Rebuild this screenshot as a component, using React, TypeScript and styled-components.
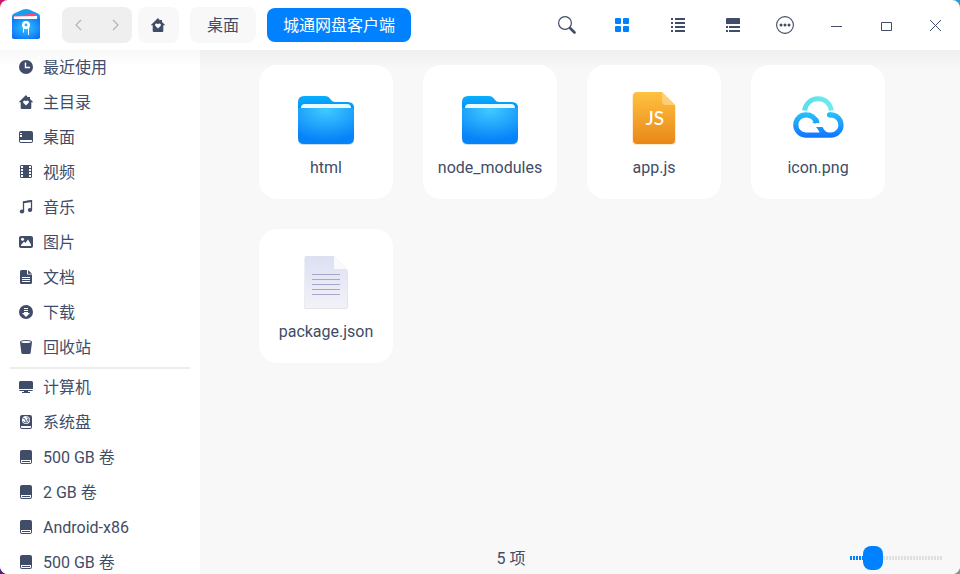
import React, { useState } from "react";
import styled, { createGlobalStyle } from "styled-components";

const INK = "#414d68";
const BLUE = "#0081ff";

const GlobalStyle = createGlobalStyle`
  * { box-sizing: border-box; }
  body {
    margin: 0;
    font-family: Roboto, "Noto Sans CJK SC", sans-serif;
    font-size: 16px;
    line-height: 24px;
    color: ${INK};
  }
  button { font: inherit; color: inherit; border: 0; padding: 0; background: none; }
  svg { display: block; flex: none; }
`;

const Desktop = styled.div`
  background:
    linear-gradient(#cf1463, #cf1463) left top / 50% 50% no-repeat,
    linear-gradient(#2a9bd0, #2a9bd0) right top / 50% 50% no-repeat,
    linear-gradient(#5a1d82, #5a1d82) left bottom / 50% 50% no-repeat,
    #8f8f8f;
`;

const Window = styled.div`
  display: flex;
  flex-direction: column;
  height: 100vh;
  overflow: hidden;
  border-radius: 8px;
  background: #fff;
`;

const TitleBar = styled.header`
  display: flex;
  align-items: center;
  flex: none;
  height: 50px;
  padding-left: 10px;
`;

const HistoryGroup = styled.div`
  display: flex;
  width: 70px;
  height: 36px;
  margin: 0 6px 0 20px;
  border-radius: 8px;
  background: #efefef;
`;

const HistoryButton = styled.button`
  display: flex;
  flex: 1;
  align-items: center;
  justify-content: center;
`;

const Crumb = styled.button<{ $active?: boolean }>`
  display: flex;
  align-items: center;
  height: ${(p) => (p.$active ? 34 : 36)}px;
  padding: 2px ${(p) => (p.$active ? 16 : 17)}px 0;
  border-radius: 8px;
  background: ${(p) => (p.$active ? BLUE : "#f8f8f8")};
  color: ${(p) => (p.$active ? "#fff" : INK)};
`;

const HomeCrumb = styled(Crumb)`
  padding: 0 13px 0 12px;
`;

const Crumbs = styled.nav`
  display: flex;
  align-items: center;
  gap: 11px;
`;

const Tools = styled.div`
  display: flex;
  align-items: center;
  margin-left: auto;
`;

const ToolButton = styled.button<{ $width: number }>`
  display: flex;
  align-items: center;
  justify-content: center;
  width: ${(p) => p.$width}px;
  height: 50px;
`;

const Body = styled.div`
  display: flex;
  flex: 1;
  min-height: 0;
`;

const Sidebar = styled.aside`
  flex: none;
  width: 200px;
  overflow: hidden;
  background: linear-gradient(#f8f8f8, #fff 16px);
`;

const PlaceLink = styled.a`
  display: flex;
  align-items: center;
  gap: 9px;
  height: 35px;
  padding-left: 18px;
  color: inherit;
  text-decoration: none;
  white-space: nowrap;

  svg { margin-bottom: 2px; }
`;

const Divider = styled.hr`
  height: 2px;
  margin: 2px 10px 1px;
  border: 0;
  background: #ededed;
`;

const Content = styled.main`
  display: flex;
  flex: 1;
  flex-direction: column;
  min-width: 0;
  background: linear-gradient(#efefef, #f8f8f8 20px);
`;

const FileGrid = styled.div`
  display: grid;
  flex: 1;
  grid-template-columns: repeat(auto-fill, 134px);
  grid-auto-rows: 134px;
  gap: 30px;
  min-height: 0;
  padding: 15px 59px 0;
  overflow: hidden;
`;

const FileCard = styled.button`
  display: flex;
  flex-direction: column;
  align-items: center;
  justify-content: flex-start;
  gap: 4px;
  padding-top: 23px;
  border-radius: 18px;
  background: #fff;
`;

const StatusBar = styled.footer`
  display: flex;
  align-items: center;
  flex: none;
  height: 32px;
  padding-right: 18px;
`;

const StatusText = styled.span`
  flex: 1;
  padding-top: 2px;
  text-align: center;
`;

const ZoomSlider = styled.input`
  width: 92px;
  height: 24px;
  margin: 0 0 0 28px;
  appearance: none;
  background:
    repeating-linear-gradient(90deg, transparent 0 2px, #f8f8f8 2px 3px),
    linear-gradient(90deg, ${BLUE} 24px, #dfdfdf 24px) center / 100% 4px no-repeat;
  &::-webkit-slider-thumb {
    appearance: none;
    width: 20px;
    height: 24px;
    border-radius: 8px;
    background: ${BLUE};
  }
`;

const Glyph = ({ children }: { children: React.ReactNode }) => (
  <svg width="16" height="16" viewBox="0 0 16 16" fill={INK} aria-hidden="true">
    {children}
  </svg>
);

const HomeGlyph = () => (
  <Glyph>
    <path d="M8 1 .7 8.2h2V14q0 1 1 1h8.600q1 0 1-1V8.200h2L12 5V3h-2v.4z" />
    <path fill="#fff" d="M8 11.500 5.300 8.800C4.300 7.200 6.500 5.600 8 7.200c1.500-1.600 3.700 0 2.700 1.600z" />
  </Glyph>
);

const DiskGlyph = () => (
  <Glyph>
    <path d="M4 1h8q2 0 2 2v10q0 2-2 2H4q-2 0-2-2V3q0-2 2-2z" />
    <path fill="#fff" d="M3 11h10v2q0 1-1 1H4q-1 0-1-1z" />
    <path d="M4 12h8v1H4z" />
  </Glyph>
);

const glyphs: Record<string, React.ReactNode> = {
  recent: (
    <Glyph>
      <circle cx="8" cy="8" r="7" />
      <path d="M7.500 3.500v5H12" fill="none" stroke="#fff" strokeWidth="1.400" />
    </Glyph>
  ),
  home: <HomeGlyph />,
  desktop: (
    <Glyph>
      <path d="M3 2h10q2 0 2 2v8q0 2-2 2H3q-2 0-2-2V4q0-2 2-2z" />
      <path fill="#fff" d="M2 4h2v1H2zM2 6h2v2H2zM2 11h12v1q0 1-1 1H3q-1 0-1-1z" />
    </Glyph>
  ),
  video: (
    <Glyph>
      <rect x="2" y="1" width="12" height="13" rx="1.500" />
      <path fill="#fff" d="M3 2h2v2H3zM3 5h2v2H3zM3 8h2v2H3zM3 11h2v2H3zM11 2h2v2h-2zM11 5h2v2h-2zM11 8h2v2h-2zM11 11h2v2h-2z" />
    </Glyph>
  ),
  music: (
    <Glyph>
      <path d="M5.500 12V3l8-1.300V10.500" fill="none" stroke={INK} strokeWidth="1.300" />
      <path d="M5 2.300 14 1v2L5 4.200z" />
      <ellipse cx="4" cy="12.500" rx="2.200" ry="1.900" />
      <ellipse cx="12" cy="11" rx="2.200" ry="1.900" />
    </Glyph>
  ),
  picture: (
    <Glyph>
      <rect x="1" y="2" width="14" height="12" rx="2" />
      <path fill="#fff" d="M3 12v-1l3-3.500 1.500 1.500L10 5.500l3 5V12z" />
      <circle cx="4.500" cy="5.300" r="1.500" fill="#fff" />
    </Glyph>
  ),
  document: (
    <Glyph>
      <path d="M3.500 1H9v4.500h5V13.500q0 1.500-1.500 1.500h-9Q2 15 2 13.500v-11Q2 1 3.500 1zM10 1l4 3.700h-4z" />
      <path d="M4 8.500h8M4 10.500h8M4 12.500h8" stroke="#fff" />
    </Glyph>
  ),
  download: (
    <Glyph>
      <circle cx="8" cy="8" r="7" />
      <path fill="#fff" d="M6 4h4v1H6zM6 6h4v1H6zM6 8h4v1h2l-4 4-4-4h2z" />
    </Glyph>
  ),
  trash: (
    <Glyph>
      <path d="M2 3q0-2 6-2t6 2l-1.300 10.500Q12.500 15 11 15H5q-1.500 0-1.700-1.500z" />
      <ellipse cx="8" cy="3" rx="4.800" ry="1.100" fill="#fff" />
    </Glyph>
  ),
  computer: (
    <Glyph>
      <path d="M2.500 2h11Q15 2 15 3.500V10H1V3.500Q1 2 2.500 2zM1 11h14q0 1-1.500 1h-11Q1 12 1 11zM6 12h4v1h2v1H4v-1h2z" />
    </Glyph>
  ),
  system: (
    <Glyph>
      <path d="M4 1h8q2 0 2 2v10q0 2-2 2H4q-2 0-2-2V3q0-2 2-2z" />
      <circle cx="8" cy="6" r="4" fill="#fff" />
      <path d="M4.500 4q3 0 3 2.500t2-.5-1-3M5 7.500q2 2 4 1.200T11 5" fill="none" stroke={INK} strokeWidth=".9" />
      <path fill="#fff" d="M3 12h10v1q0 1-1 1H4q-1 0-1-1z" />
    </Glyph>
  ),
  disk: <DiskGlyph />,
};

const FolderIcon = () => (
  <svg width="64" height="64" viewBox="0 0 64 64" aria-hidden="true">
    <defs>
      <linearGradient id="folderBack" x2="0" y2="1">
        <stop stopColor="#08b0ff" />
        <stop offset=".4" stopColor="#0783f5" />
      </linearGradient>
      <radialGradient id="folderFront" cx=".5" cy=".05" r=".85">
        <stop stopColor="#3fcbff" />
        <stop offset="1" stopColor="#0783f8" />
      </radialGradient>
    </defs>
    <path d="M4 17h56v34q0 6-6 6H10q-6 0-6-6z" fill="#0a5fbd" opacity=".22" />
    <path d="M4 14q0-6 6-6h21q3 0 4.500 2l1.500 2q1.500 2 4 2h13q6 0 6 6v30H4z" fill="url(#folderBack)" />
    <path d="M4 20h56v30q0 6-6 6H10q-6 0-6-6z" fill="url(#folderFront)" />
    <path d="M7 20q0-4 4-4h42q4 0 4 4z" fill="#eafaff" />
  </svg>
);

const ScriptIcon = () => (
  <svg width="64" height="64" viewBox="0 0 64 64" aria-hidden="true">
    <defs>
      <linearGradient id="scriptPaper" x2="0" y2="1">
        <stop stopColor="#ffc140" />
        <stop offset="1" stopColor="#e98718" />
      </linearGradient>
    </defs>
    <path d="M14 5h26l14 13v35q0 4-4 4H14q-4 0-4-4V9q0-4 4-4z" fill="#f39a28" opacity=".2" />
    <path d="M15 4h25l13 13v35q0 4-4 4H15q-4 0-4-4V8q0-4 4-4z" fill="url(#scriptPaper)" />
    <path d="M40 4l13 13h-9q-4 0-4-4z" fill="#ffd68a" opacity=".75" />
    <text x="33" y="37" textAnchor="middle" fontFamily="Lato, sans-serif" fontSize="19" fontWeight="500" fill="#fff">JS</text>
  </svg>
);

const CloudIcon = () => (
  <svg width="64" height="64" viewBox="0 0 64 64" fill="none" aria-hidden="true">
    <defs>
      <linearGradient id="cloudBody" gradientUnits="userSpaceOnUse" x1="0" y1="24" x2="0" y2="50">
        <stop stopColor="#25c5fb" />
        <stop offset="1" stopColor="#1273ff" />
      </linearGradient>
      <linearGradient id="cloudTop" gradientUnits="userSpaceOnUse" x1="16" y1="0" x2="48" y2="0">
        <stop stopColor="#57dfe9" />
        <stop offset="1" stopColor="#72eaf0" />
      </linearGradient>
    </defs>
    <path d="M18.500 22.500C20 15 25.500 10.700 32 10.700S44 15 45.500 22.500" stroke="url(#cloudTop)" strokeWidth="5" />
    <path d="M31 34.800C28.500 29 24.500 26.800 20.500 26.800A10.200 10.200 0 0 0 19.500 47.200H44.800A10.200 10.200 0 0 0 44.800 26.800H43.500" stroke="url(#cloudBody)" strokeWidth="5.200" />
    <circle cx="43.500" cy="26.800" r="2.600" fill="url(#cloudBody)" />
    <path d="M26 35h7.500L32 30zM30 39h6.500c2 4 4.500 6 8 6v4H34.500c0-3-1.500-7-4.500-10z" fill="url(#cloudBody)" />
  </svg>
);

const TextIcon = () => (
  <svg width="64" height="64" viewBox="0 0 64 64" aria-hidden="true">
    <defs>
      <linearGradient id="textPaper" x2="0" y2="1">
        <stop stopColor="#dce0f1" />
        <stop offset="1" stopColor="#f2f2f8" />
      </linearGradient>
    </defs>
    <path d="M11 5h29l14 14v36q0 2-2 2H12q-2 0-2-2z" fill="#777" opacity=".2" />
    <path d="M12 4h28l13 13v37q0 2-2 2H12q-1.500 0-1.500-2V6q0-2 1.500-2z" fill="url(#textPaper)" />
    <path d="M40 4l13 13H40z" fill="#fafafc" />
    <path d="M18 22.500h28M18 27.500h28M18 32.500h28M18 37.500h28M18 42.500h28" stroke="#aaa5ca" />
  </svg>
);

const AppLogo = () => (
  <svg width="32" height="34" viewBox="0 0 32 34" aria-hidden="true">
    <defs>
      <radialGradient id="logoFront" cx=".5" cy=".45" r=".7">
        <stop stopColor="#32c5ff" />
        <stop offset="1" stopColor="#086bf7" />
      </radialGradient>
    </defs>
    <path d="M2 8Q2 6.500 4 5.500l9-4q3-1 6 0l9 4q2 1 2 2.500v22H2z" fill="#159df2" />
    <path d="M4 8 24 5.500l3 2V12H4z" fill="#ff4775" />
    <path d="M2 10.500h28V29q0 2-2 2H4q-2 0-2-2z" fill="url(#logoFront)" />
    <path d="M4 8.500 27 8v3H4z" fill="#fff" />
    <circle cx="16" cy="17" r="2.700" fill="none" stroke="#fff" strokeWidth="2.600" />
    <path d="M13.500 20v4.500M18.500 20v7" stroke="#fff" />
  </svg>
);

const places: [string, string][] = [
  ["recent", "最近使用"],
  ["home", "主目录"],
  ["desktop", "桌面"],
  ["video", "视频"],
  ["music", "音乐"],
  ["picture", "图片"],
  ["document", "文档"],
  ["download", "下载"],
  ["trash", "回收站"],
];

const devices: [string, string][] = [
  ["computer", "计算机"],
  ["system", "系统盘"],
  ["disk", "500 GB 卷"],
  ["disk", "2 GB 卷"],
  ["disk", "Android-x86"],
  ["disk", "500 GB 卷"],
];

const files: [string, React.ComponentType][] = [
  ["html", FolderIcon],
  ["node_modules", FolderIcon],
  ["app.js", ScriptIcon],
  ["icon.png", CloudIcon],
  ["package.json", TextIcon],
];

const Places = ({ items }: { items: [string, string][] }) => (
  <>
    {items.map(([icon, label], i) => (
      <PlaceLink href="#" key={i}>
        {glyphs[icon]}
        {label}
      </PlaceLink>
    ))}
  </>
);

export default function App() {
  const [zoom, setZoom] = useState(18);
  return (
    <Desktop>
      <GlobalStyle />
      <Window>
        <TitleBar>
          <AppLogo />
          <HistoryGroup>
            <HistoryButton aria-label="后退">
              <svg width="10" height="12" viewBox="0 0 10 12" fill="none" stroke="#b0b4bd" strokeWidth="1.200"><path d="M6 1 1 6l5 5" /></svg>
            </HistoryButton>
            <HistoryButton aria-label="前进">
              <svg width="8" height="12" viewBox="0 0 8 12" fill="none" stroke="#b0b4bd" strokeWidth="1.200"><path d="m2 1 5 5-5 5" /></svg>
            </HistoryButton>
          </HistoryGroup>
          <Crumbs aria-label="路径">
            <HomeCrumb aria-label="主目录"><HomeGlyph /></HomeCrumb>
            <Crumb>桌面</Crumb>
            <Crumb $active>城通网盘客户端</Crumb>
          </Crumbs>
          <Tools>
            <ToolButton $width={54} aria-label="搜索">
              <svg width="18" height="18" viewBox="0 0 18 18" fill="none" stroke={INK}>
                <circle cx="7" cy="7" r="6.400" strokeWidth="1.200" />
                <path d="m11.500 11.500 1.500 1.500" strokeWidth="1.500" />
                <path d="m12.500 12.500 4 4" strokeWidth="2.600" strokeLinecap="round" />
              </svg>
            </ToolButton>
            <ToolButton $width={56} aria-label="图标视图">
              <svg width="14" height="14" viewBox="0 0 14 14" fill={BLUE}>
                <rect width="6" height="6" rx="1" /><rect x="8" width="6" height="6" rx="1" />
                <rect y="8" width="6" height="6" rx="1" /><rect x="8" y="8" width="6" height="6" rx="1" />
              </svg>
            </ToolButton>
            <ToolButton $width={56} aria-label="列表视图">
              <svg width="14" height="14" viewBox="0 0 14 14" fill={INK}>
                <path d="M0 0h2v2H0zM4 0h10v2H4zM0 4h2v2H0zM4 4h10v2H4zM0 8h2v2H0zM4 8h10v2H4zM0 12h2v2H0zM4 12h10v2H4z" />
              </svg>
            </ToolButton>
            <ToolButton $width={54} aria-label="分栏视图">
              <svg width="14" height="14" viewBox="0 0 14 14" fill={INK}>
                <path d="M1 0h12q1 0 1 1v5H0V1q0-1 1-1zM0 8h2v2H0zM3 8h11v2H3zM0 12h2v2H0zM3 12h11v2H3z" />
              </svg>
            </ToolButton>
            <ToolButton $width={52} aria-label="菜单">
              <svg width="20" height="18" viewBox="0 0 20 18" fill={INK}>
                <circle cx="9" cy="9" r="8.400" fill="none" stroke={INK} strokeWidth="1.100" />
                <circle cx="5" cy="9" r="1.500" /><circle cx="9" cy="9" r="1.500" /><circle cx="13" cy="9" r="1.500" />
              </svg>
            </ToolButton>
            <ToolButton $width={50} aria-label="最小化">
              <svg width="12" height="12" viewBox="0 0 12 12"><path d="M0 7.500h11" stroke={INK} /></svg>
            </ToolButton>
            <ToolButton $width={49} aria-label="最大化">
              <svg width="11" height="12" viewBox="0 0 11 12"><path d="M.5 3.500h10v8H.5z" fill="none" stroke={INK} /></svg>
            </ToolButton>
            <ToolButton $width={49} aria-label="关闭">
              <svg width="11" height="12" viewBox="0 0 11 12"><path d="m0 1 11 11M11 1 0 12" stroke={INK} /></svg>
            </ToolButton>
          </Tools>
        </TitleBar>
        <Body>
          <Sidebar>
            <Places items={places} />
            <Divider />
            <Places items={devices} />
          </Sidebar>
          <Content>
            <FileGrid>
              {files.map(([name, Icon]) => (
                <FileCard key={name}>
                  <Icon />
                  {name}
                </FileCard>
              ))}
            </FileGrid>
            <StatusBar>
              <StatusText>5 项</StatusText>
              <ZoomSlider
                type="range"
                aria-label="图标大小"
                value={zoom}
                onChange={(e) => setZoom(Number(e.target.value))}
              />
            </StatusBar>
          </Content>
        </Body>
      </Window>
    </Desktop>
  );
}
